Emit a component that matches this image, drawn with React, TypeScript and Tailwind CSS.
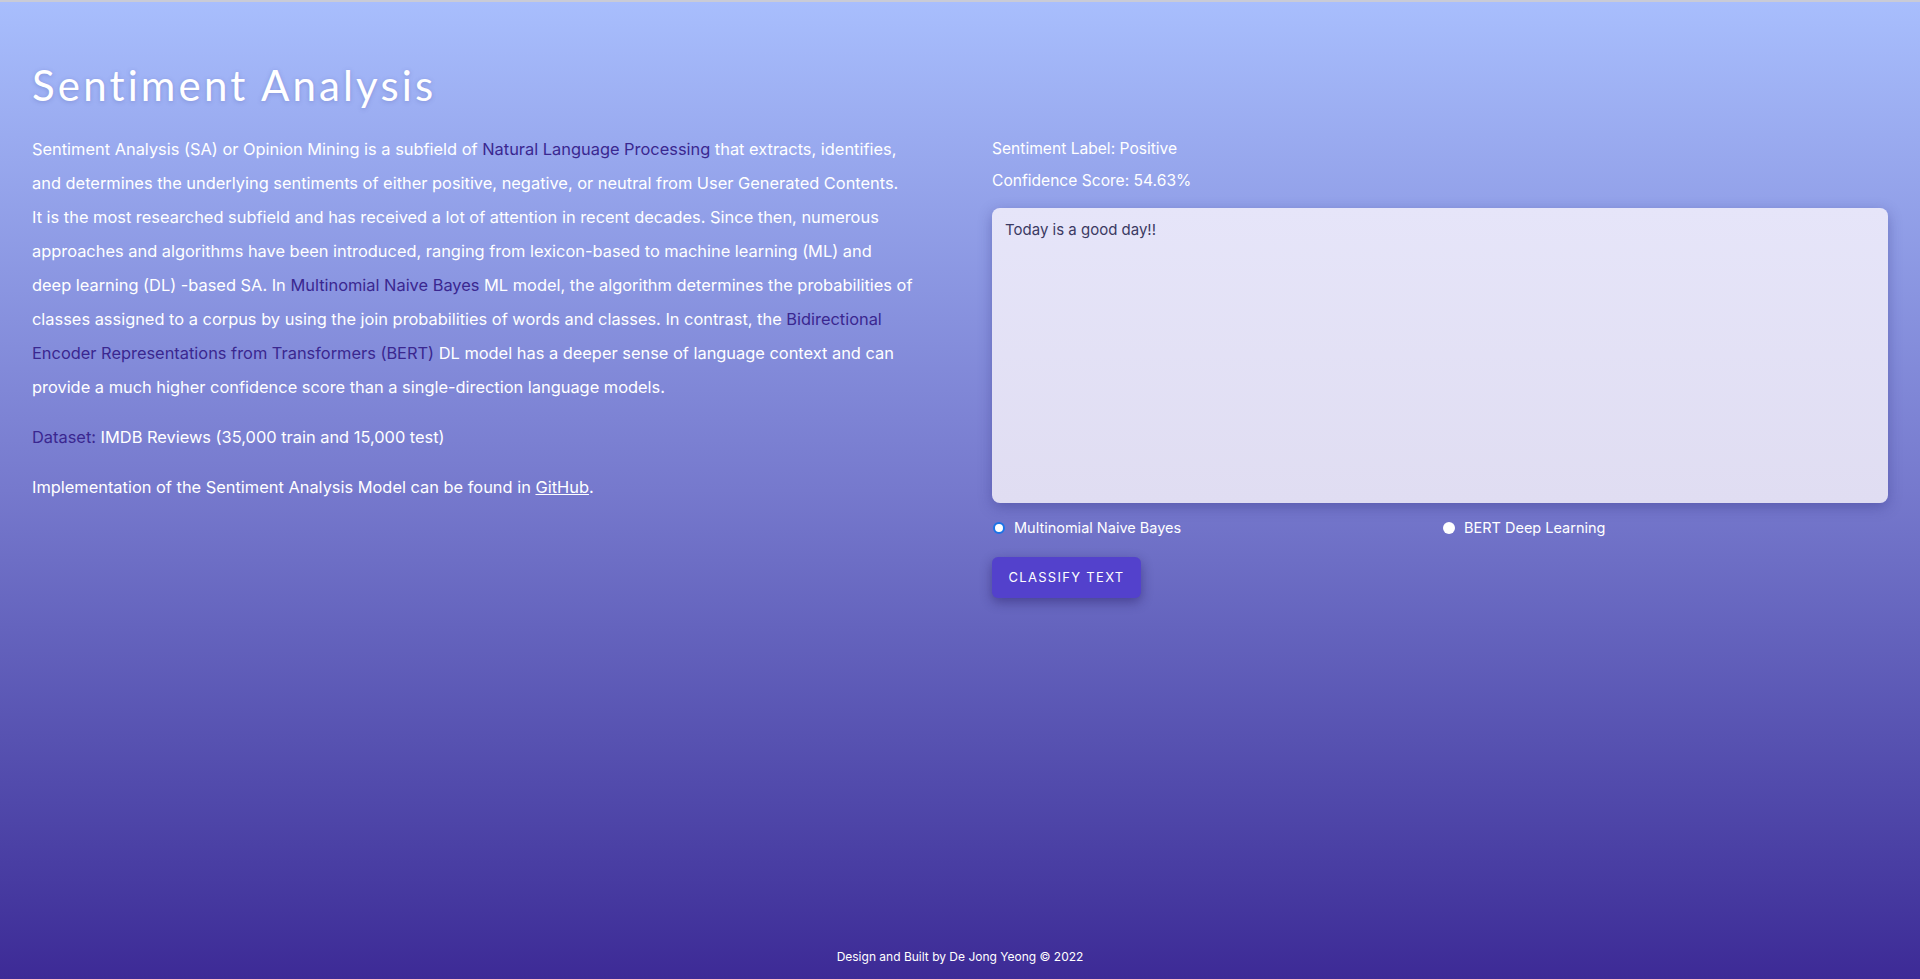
import React, { useState } from 'react';

const link = 'text-[#3a2790]';

export default function App() {
  const [model, setModel] = useState<'nb' | 'bert'>('nb');
  const [text, setText] = useState('Today is a good day!!');

  return (
    <div className="min-h-screen flex flex-col border-t-2 border-[#c9cbd6] bg-gradient-to-b from-[#a8befd] via-[#7679cd] to-[#3d2a96] font-['Inter',sans-serif] text-white">
      <main className="flex-1 px-8 pt-[62px]">
        {/* Title */}
        <h1 className="font-['Lato',sans-serif] text-[42px] leading-[42px] tracking-[0.075em] [text-shadow:0_1px_4px_rgba(80,90,170,0.35)]">
          Sentiment Analysis
        </h1>

        <div className="grid grid-cols-2 gap-16 mt-[26px]">
          {/* Left column: description */}
          <div className="text-[16.4px] leading-[34px]">
            <p>
              Sentiment Analysis (SA) or Opinion Mining is a subfield of <span className={link}>Natural Language Processing</span> that extracts, identifies,<br />
              and determines the underlying sentiments of either positive, negative, or neutral from User Generated Contents.<br />
              It is the most researched subfield and has received a lot of attention in recent decades. Since then, numerous<br />
              approaches and algorithms have been introduced, ranging from lexicon-based to machine learning (ML) and<br />
              deep learning (DL) -based SA. In <span className={link}>Multinomial Naive Bayes</span> ML model, the algorithm determines the probabilities of<br />
              classes assigned to a corpus by using the join probabilities of words and classes. In contrast, the <span className={link}>Bidirectional<br />
              Encoder Representations from Transformers (BERT)</span> DL model has a deeper sense of language context and can<br />
              provide a much higher confidence score than a single-direction language models.
            </p>
            <p className="mt-4">
              <span className={link}>Dataset:</span> IMDB Reviews (35,000 train and 15,000 test)
            </p>
            <p className="mt-4">
              Implementation of the Sentiment Analysis Model can be found in <a className="underline">GitHub</a>.
            </p>
          </div>

          {/* Right column: classifier */}
          <div className="text-[15.6px]">
            <p className="leading-[33px]">Sentiment Label: Positive</p>
            <p className="leading-[32px]">Confidence Score: 54.63%</p>
            <textarea
              value={text}
              onChange={(e) => setText(e.target.value)}
              className="mt-[11px] block w-full h-[295px] resize-none rounded-lg bg-gradient-to-b from-[#e6e5f9] to-[#e0ddf2] px-[13px] py-[11px] text-[15px] text-[#3b3a63] outline-none shadow-[0_4px_14px_rgba(40,40,120,0.35)]"
            />

            <div className="grid grid-cols-2 mt-[16px] text-[14.5px] leading-[18px]">
              <label className="flex items-center gap-[9px] pl-[1px] cursor-pointer" onClick={() => setModel('nb')}>
                {model === 'nb' ? (
                  <span className="w-[12px] h-[12px] rounded-full border-2 border-[#1a73e8] bg-white" />
                ) : (
                  <span className="w-[12px] h-[12px] rounded-full bg-white" />
                )}
                Multinomial Naive Bayes
              </label>
              <label className="flex items-center gap-[9px] pl-[3px] cursor-pointer" onClick={() => setModel('bert')}>
                {model === 'bert' ? (
                  <span className="w-[12px] h-[12px] rounded-full border-2 border-[#1a73e8] bg-white" />
                ) : (
                  <span className="w-[12px] h-[12px] rounded-full bg-white" />
                )}
                BERT Deep Learning
              </label>
            </div>

            <button className="mt-[20px] h-[41px] w-[149px] rounded-md bg-[#5341cc] text-[13px] tracking-[0.1em] uppercase text-white shadow-[0_4px_12px_rgba(30,20,90,0.45)]">
              Classify Text
            </button>
          </div>
        </div>
      </main>

      <footer className="pt-[16px] pb-[14px] text-center text-[12px] leading-[16px]">
        Design and Built by De Jong Yeong © 2022
      </footer>
    </div>
  );
}
